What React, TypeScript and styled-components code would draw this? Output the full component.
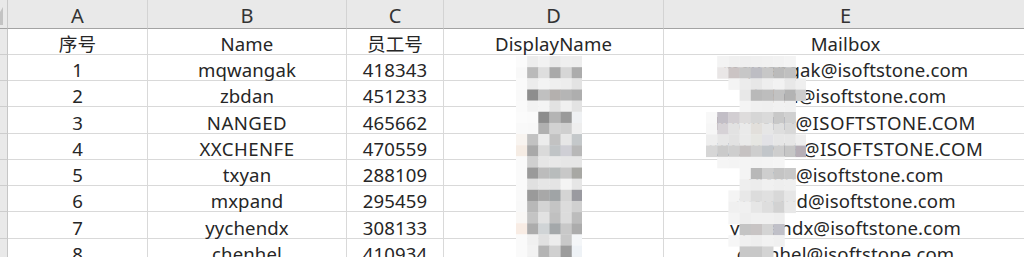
import React from 'react';
import styled, {createGlobalStyle} from 'styled-components';

const GlobalStyle = createGlobalStyle`
  html, body {
    margin: 0;
    padding: 0;
    background: #ffffff;
    overflow: hidden;
  }
  body {
    font-family: "Noto Sans", "Noto Sans CJK SC", sans-serif;
  }
`;

const Sheet = styled.div`
  position: relative;
  width: 1024px;
  height: 257px;
  overflow: hidden;
  background: #ffffff;
`;

const Grid = styled.div`
  display: grid;
  grid-template-columns: 8px 140px 199px 97px 220px 364px;
  grid-template-rows: 28.5px repeat(9, 26.28px);
`;

const Corner = styled.div`
  box-sizing: border-box;
  display: flex;
  align-items: flex-end;
  padding-bottom: 3px;
  background: #e9e9e9;
  border-right: 1px solid #c9c9c9;
  border-bottom: 1px solid #a3a3a3;
`;

const ColHead = styled.div`
  box-sizing: border-box;
  display: flex;
  align-items: flex-end;
  justify-content: center;
  padding-bottom: 2px;
  background: #e9e9e9;
  border-right: 1px solid #d3d3d3;
  border-bottom: 1px solid #a3a3a3;
  font-size: 20px;
  line-height: 20px;
  color: #333333;
`;

const RowHead = styled.div`
  box-sizing: border-box;
  background: #e9e9e9;
  border-right: 1px solid #c6c6c6;
  border-bottom: 1px solid #cdcdcd;
`;

const Cell = styled.div<{$caps?: boolean}>`
  box-sizing: border-box;
  display: flex;
  align-items: flex-end;
  justify-content: center;
  padding-bottom: 1px;
  border-right: 1px solid #d9d9d9;
  border-bottom: 1px solid #d9d9d9;
  font-size: 18.6px;
  line-height: 18px;
  letter-spacing: ${p => (p.$caps ? '0.45px' : '0.1px')};
  color: #262626;
  white-space: nowrap;
`;

const MosaicLayer = styled.svg<{$x: number; $y: number}>`
  position: absolute;
  left: ${p => p.$x}px;
  top: ${p => p.$y}px;
  pointer-events: none;
`;

type Row = {no: string; name: string; id: string; display: string; mail: string};

const columns = ['A', 'B', 'C', 'D', 'E'];
const titles = ['序号', 'Name', '员工号', 'DisplayName', 'Mailbox'];

const rows: Row[] = [
  {no: '1', name: 'mqwangak', id: '418343', display: '', mail: 'mqwangak@isoftstone.com'},
  {no: '2', name: 'zbdan', id: '451233', display: '', mail: 'zbdan@isoftstone.com'},
  {no: '3', name: 'NANGED', id: '465662', display: '', mail: 'NANGED@ISOFTSTONE.COM'},
  {no: '4', name: 'XXCHENFE', id: '470559', display: '', mail: 'XXCHENFE@ISOFTSTONE.COM'},
  {no: '5', name: 'txyan', id: '288109', display: '', mail: 'txyan@isoftstone.com'},
  {no: '6', name: 'mxpand', id: '295459', display: '', mail: 'mxpand@isoftstone.com'},
  {no: '7', name: 'yychendx', id: '308133', display: '', mail: 'yychendx@isoftstone.com'},
  {no: '8', name: 'chenhel', id: '410934', display: '', mail: 'chenhel@isoftstone.com'},
];

const isCaps = (s: string) => s !== '' && s === s.toUpperCase() && /[A-Z]/.test(s);

// pixelated blur blocks over the DisplayName column
const displayBlur: string[][] = [
  ['#fbfbfb', '#ededed', '#f2f2f2', '#e9e9e9', '#efefef', '#eeeeee'],
  ['#f8f8f8', '#bababa', '#dedede', '#a9a9a9', '#d6d6d6', '#acacac'],
  ['#fafafa', '#ececec', '#f3f3f3', '#efefef', '#ededed', '#e3e3e3'],
  ['#f9f9f9', '#8e8e8e', '#c0c0c0', '#b4b0ae', '#b5b5b5', '#aeaeae'],
  ['#fafafa', '#f2f2f2', '#f4f4f4', '#e2e2e2', '#f0f0f0', '#e3e3e3'],
  ['#fbfbfb', '#fafafa', '#8c8c8c', '#b4b4b4', '#9a9a9a', '#eff1f3'],
  ['#f9f9f9', '#f8f8f8', '#b0b0b0', '#d2d2d2', '#cfcfcf', '#eeeeee'],
  ['#f8f4f0', '#c2c2c2', '#ececec', '#c2c2c2', '#e6e6e6', '#c4c8ca'],
  ['#f5ece4', '#a9a9a9', '#dadada', '#c0c4c6', '#cfcfd5', '#b8b8b8'],
  ['#fafafa', '#d0d0d0', '#e6e6e6', '#e8e8e8', '#e6e6e6', '#e6e6e6'],
  ['#fafafa', '#9a9a9a', '#bcbcbc', '#b8bcbc', '#c8c8c8', '#a8a8a4'],
  ['#fafafa', '#e0e0e0', '#e6e6e6', '#e4e4e4', '#f4f4f4', '#e6e6e6'],
  ['#f9f9f9', '#9a9a9a', '#a8a8a8', '#a0a4a6', '#d4d4d4', '#9a9aa0'],
  ['#f8f8f8', '#b8b8b8', '#d4d4d4', '#c4c4c4', '#dcdcdc', '#d0d0d0'],
  ['#f9f7f5', '#c4c4c4', '#e2e2e2', '#c0c0c0', '#dcdcdc', '#bcbcbc'],
  ['#f8ece4', '#acacac', '#d0d4d6', '#a4a8aa', '#c8c8c8', '#acacac'],
  ['#fafafa', '#f0f0f0', '#e0e0e0', '#ececec', '#c8c8c8', '#f4f6f8'],
  ['#fafafa', '#f2f2f2', '#b4b4b4', '#d0d0d0', '#9c9c9c', '#eef2f6'],
  ['#fafafa', '#ededed', '#b8b8b8', '#c8c8c8', '#9a9a9a', '#f0f0f0'],
];

// pixelated blur blocks over the mailbox prefixes
const mailBlur: string[][] = [
  ['', '#f3f3f3', '#f0f0f0', '#efefef', '#f0f0f0', '#f1f1f1', '#f2f2f2', '#f4f4f4', ''],
  ['', '#e9e6e6', '#cbc4c4', '#c7c7c7', '#bdbdc3', '#c7c7c7', '#bbbbbb', '#c0c0c0', ''],
  ['', '', '#f4f4f4', '#ececec', '#e7e7e7', '#eeeeee', '#f2f2f2', '#e8e8e8', '#efefef'],
  ['', '', '', '#e8e8e8', '#b9b9b9', '#bdbdbd', '#c2c2c2', '#b3b3b3', '#cdcdcd'],
  ['', '', '', '#f4f4f4', '#f0f0f0', '#efefef', '#f1f1f1', '#f0f0f0', ''],
  ['#f8f8f8', '#c2bec6', '#d2ced2', '#dedcdc', '#d6d6d6', '#dadada', '#c8c8c8', '#d0d0d0', ''],
  ['#f6f6f6', '#d6d2d6', '#e2e2e2', '#eaeaea', '#e2dfdb', '#e6e6e6', '#dedede', '#d8d8d8', ''],
  ['#eeeeee', '#e6e6e6', '#e2e2e2', '#eaeaea', '#e6e6e2', '#e2e2e6', '#e6e6e6', '#e6e6e6', '#eeeeee'],
  ['#d6d6d6', '#cacaca', '#cecece', '#c6c2c2', '#cecece', '#c2c6ca', '#cecece', '#c6c6c6', '#b6aeb6'],
  ['', '#f5f5f5', '#f4f4f4', '#f4f4f4', '#f3f3f3', '#f4f4f4', '#f5f5f5', '', ''],
  ['', '', '', '#f4f4f4', '#b8b8b8', '#cecece', '#c4c4c4', '#c8c8c8', ''],
  ['', '', '', '#eeeeee', '#ececec', '#f0f0f0', '#eeeeee', '#efefef', ''],
  ['', '', '#f4f4f4', '#e8e8e8', '#dcdcdc', '#e0e0e0', '#d8d8d8', '#e6e6e6', ''],
  ['', '', '#f0f0f0', '#f0f0f0', '#e6e6e6', '#dedede', '#d2d2d2', '#e8e8e8', ''],
  ['', '', '#f4f4f4', '#eeeeee', '#f0f0f0', '#f0f0f0', '#eeeeee', '', ''],
  ['', '', '', '#c4c4c4', '#c8c4c4', '#d4d4d4', '#c0c0c8', '', ''],
  ['', '', '#f6f6f6', '#f0f0f0', '#eeeeee', '#f2f2f2', '#f0f0f0', '', ''],
  ['', '', '', '#c8c8c8', '#c8c8c8', '#d4d4d4', '', '', ''],
  ['', '', '', '#d0d0d0', '#c8c8c8', '#d0d0d0', '', '', ''],
];

const Mosaic = ({x, y, size, blocks}: {x: number; y: number; size: number; blocks: string[][]}) => {
  const cols = Math.max(...blocks.map(r => r.length));
  return (
    <MosaicLayer $x={x} $y={y} width={cols * size} height={blocks.length * size}
                 viewBox={`0 0 ${cols * size} ${blocks.length * size}`}>
      {blocks.map((row, r) => row.map((fill, c) => fill ? (
        <rect key={`${r}-${c}`} x={c * size} y={r * size} width={size + 0.3} height={size + 0.3} fill={fill}/>
      ) : null))}
    </MosaicLayer>
  );
};

const SelectAll = () => (
  <svg width="4" height="18" viewBox="0 0 4 18">
    <polygon points="0,5 3,0 3,18 0,18" fill="#c3c3c3"/>
  </svg>
);

const App = () => {
  return (
    <Sheet>
      <GlobalStyle/>
      <Grid>
        <Corner><SelectAll/></Corner>
        {columns.map(c => <ColHead key={c}>{c}</ColHead>)}

        <RowHead/>
        {titles.map(t => <Cell key={t}>{t}</Cell>)}

        {rows.map(row => (
          <React.Fragment key={row.no}>
            <RowHead/>
            <Cell>{row.no}</Cell>
            <Cell $caps={isCaps(row.name)}>{row.name}</Cell>
            <Cell>{row.id}</Cell>
            <Cell>{row.display}</Cell>
            <Cell $caps={isCaps(row.mail)}>{row.mail}</Cell>
          </React.Fragment>
        ))}
      </Grid>
      <Mosaic x={515.5} y={55.5} size={11.15} blocks={displayBlur}/>
      <Mosaic x={705.5} y={55.5} size={11.2} blocks={mailBlur}/>
    </Sheet>
  );
};

export default App;
